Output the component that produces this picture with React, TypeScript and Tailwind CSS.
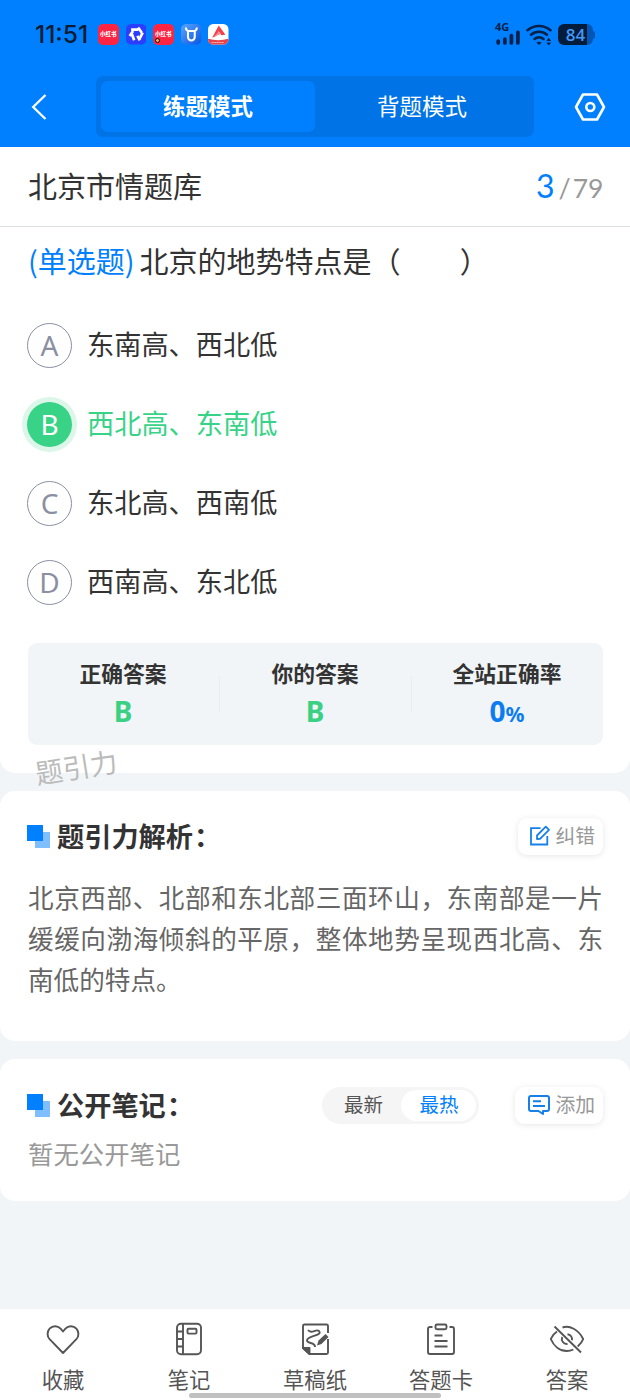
import type { ReactNode } from "react";
import { clsx } from "clsx";

const options = [
  { key: "A", text: "东南高、西北低" },
  { key: "B", text: "西北高、东南低" },
  { key: "C", text: "东北高、西南低" },
  { key: "D", text: "西南高、东北低" },
];

const answer = "B";

function StatusBar() {
  return (
    <div className="flex h-[66px] items-center pl-[35px] pr-[35px] pt-[3px]">
      <span className="w-[55px] whitespace-nowrap font-['Inter'] text-[24.5px] font-medium leading-none text-[#0b1c33]">
        11:51
      </span>
      <div className="ml-2 flex gap-[7px]">
        <span className="flex size-[20.5px] items-center justify-center whitespace-nowrap rounded-[5px] bg-[#ff2442] text-[5.5px] font-black text-white">
          小红书
        </span>
        <svg viewBox="0 0 20 20" className="size-[20.5px]">
          <rect width="20" height="20" rx="5" fill="#2b3dff" />
          <path
            d="M5 5.5h7M11.8 3.5l3.6 5M16.3 8.5l-3 5.8M13.5 16l-2.4-4.5M8 15.8L5.8 10M3.6 11.8l3.3-5"
            fill="none"
            stroke="#fff"
            strokeWidth="2.6"
          />
        </svg>
        <span className="relative flex size-[20.5px] items-center justify-center whitespace-nowrap rounded-[5px] bg-[#ff2442] text-[5.5px] font-black text-white">
          小红书
          <i className="absolute bottom-[2px] left-[2px] size-[5px] rounded-full border-[1.5px] border-[#1c0c0c] bg-[#e8b060]" />
        </span>
        <svg viewBox="0 0 20 20" className="size-[20.5px]">
          <defs>
            <linearGradient id="bull" x1="0" y1="0" x2="1" y2="1">
              <stop offset="0" stopColor="#5aa4ff" />
              <stop offset="1" stopColor="#0a55e0" />
            </linearGradient>
          </defs>
          <rect width="20" height="20" rx="5" fill="url(#bull)" />
          <path d="M6.8 6.8v6a3.3 3.3 0 0 0 6.6 0v-6zM4.8 3.5c0 2 .8 3 2.2 3.3M15.4 3.5c0 2-.8 3-2.2 3.3" fill="none" stroke="#fff" strokeWidth="2" />
        </svg>
        <svg viewBox="0 0 20 20" className="size-[20.5px]">
          <rect width="20" height="20" rx="5" fill="#fff" />
          <path d="M0 14.5q10 2.5 20 0V15a5 5 0 0 1-5 5H5a5 5 0 0 1-5-5z" fill="#e8434a" />
          <path d="M4 13.5L10.5 1.5 17 10.5l-4 .5-2.5-4-3 5z" fill="#f0414c" />
          <path d="M5 13l8-3.5-2.5-2z" fill="#ff8b8f" />
          <path d="M3.5 18h12" stroke="#ffb9ba" strokeWidth="1" strokeDasharray="1.3 .4" />
        </svg>
      </div>

      <div className="ml-auto flex items-center">
        <div className="flex w-[25px] flex-col">
          <span className="h-[6px] font-['Open_Sans'] text-[11px] font-bold leading-[6px] text-[#04214a]">4G</span>
          <svg viewBox="0 0 25 15" className="h-[15px] w-[25px]" stroke="#04214a" strokeWidth="3.7" strokeLinecap="round">
            <path d="M3.2 11v2M9.9 9v4M16.4 5.5V13M22.9 2.3V13" />
          </svg>
        </div>
        <svg viewBox="0 0 26 22" className="ml-[6px] h-[22px] w-[26px]" fill="none" stroke="#04214a" strokeWidth="2.5" strokeLinecap="round">
          <path d="M1.5 6.3a17.5 17.5 0 0 1 23 0M5 10.8a12.2 12.2 0 0 1 16 0M8.5 15a7 7 0 0 1 9 0" />
          <path d="M10.3 18.6q2.7-1.8 5.4 0L13 21z" fill="#04214a" stroke="none" />
          <path d="M20.3 17l2.4-3.2 2.4 3.2zM20.3 18.4h4.8L22.7 21.5z" fill="#04214a" stroke="none" />
        </svg>
        <div className="ml-[6px] flex h-[21px] w-[35px] items-center justify-center rounded-[6px] bg-linear-to-r from-[#041c3c] from-83% to-[#0456b4] to-83%">
          <span className="font-['Open_Sans'] text-[17px] font-semibold leading-none text-[#4499f5]">84</span>
        </div>
        <i className="h-2 w-[2px] rounded-r-full bg-[#0456b4]" />
      </div>
    </div>
  );
}

function ModeHeader() {
  return (
    <div className="flex h-[81px] items-center justify-between pl-[31px] pr-[24px]">
      <svg viewBox="0 0 16 26" className="h-[26px] w-4" fill="none" stroke="#fff" strokeWidth="2.3">
        <path d="M14.5 1L2.2 13l12.3 12" />
      </svg>
      <div className="ml-[9px] flex h-[61px] w-[438px] rounded-[7px] bg-[#0073e6] p-[5px] text-[22.5px] text-white">
        <div className="flex w-[214px] items-center justify-center rounded-[7px] bg-[#0080ff] pb-[2px] font-bold">练题模式</div>
        <div className="flex w-[214px] items-center justify-center pb-[2px]">背题模式</div>
      </div>
      <svg viewBox="0 0 32 28" className="h-7 w-8" fill="none" stroke="#fff" strokeWidth="2.6" strokeLinejoin="round">
        <path d="M9 1.5h14L30 14l-7 12.5H9L2 14z" />
        <circle cx="16.3" cy="14" r="4" />
      </svg>
    </div>
  );
}

function SectionTitle({ children }: { children: ReactNode }) {
  return (
    <div className="flex items-center">
      <div className="relative size-[23px]">
        <i className="absolute bottom-0 right-0 size-[15.5px] bg-[#80bfff]" />
        <i className="absolute left-0 top-0 size-4 bg-[#0080ff]" />
      </div>
      <h2 className="ml-[7px] -mt-[3px] text-[27.2px] font-bold leading-[36px] text-[#333]">
        {children}
        <span className="ml-px">：</span>
      </h2>
    </div>
  );
}

function ToolButton({ icon, label }: { icon: ReactNode; label: string }) {
  return (
    <button className="flex h-[37px] items-center gap-[4px] rounded-[9px] bg-white pr-2 text-[19.8px] leading-none text-[#999] shadow-[0_1px_6px_rgba(0,0,0,0.1)]">
      {icon}
      <span className="-mt-[2px]">{label}</span>
    </button>
  );
}

function Stat({ label, children }: { label: string; children: ReactNode }) {
  return (
    <div className="flex flex-1 flex-col items-center">
      <span className="text-[21.8px] font-bold leading-[30px] text-[#333]">{label}</span>
      <span className="mt-[3px] h-[40px] font-['Noto_Sans'] text-[28px] font-bold leading-[40px] text-[#3bd083]">{children}</span>
    </div>
  );
}

const navItems = [
  {
    label: "收藏",
    icon: <path d="M17 31L3.6 17.2a8 8 0 0 1 0-10.6 7.5 7.5 0 0 1 11 0L17 9.5l2.4-2.9a7.5 7.5 0 0 1 11 0 8 8 0 0 1 0 10.6z" />,
  },
  {
    label: "笔记",
    icon: (
      <>
        <rect x="5" y="1.8" width="24" height="30.4" rx="4" />
        <path d="M11 2v30M5 9.5h6M5 17h6M5 24.5h6" />
        <rect x="15.5" y="6.8" width="9" height="4.8" rx="1" />
      </>
    ),
  },
  {
    label: "草稿纸",
    icon: (
      <>
        <path d="M30 11V4a1.5 1.5 0 0 0-1.5-1.5h-22A1.5 1.5 0 0 0 5 4v22l6.5 6h17a1.5 1.5 0 0 0 1.5-1.5V17" />
        <path d="M5 26h6.500v6z" fill="#555" />
        <path d="M10 8c3.5 5 8-2 11 1 4 5-12 4.5-12 9.5 0 3.5 8.5 1.5 8 6.5" />
        <path d="M19 23.5l1.5-5 7-6.5 3 3-7 7z" fill="#555" stroke="none" />
      </>
    ),
  },
  {
    label: "答题卡",
    icon: (
      <>
        <path d="M8.5 5H6a2 2 0 0 0-2 2v23a2 2 0 0 0 2 2h22a2 2 0 0 0 2-2V7a2 2 0 0 0-2-2h-2.5" />
        <rect x="11.5" y="2.5" width="11" height="4.8" rx="1.5" />
        <path d="M10.5 13.5h8M10.5 19h13M10.5 24.5h13" />
      </>
    ),
  },
  {
    label: "答案",
    icon: (
      <>
        <path d="M7 9.5C4 11.5 1.8 14.5.8 17c3 7 9 12 16 12 2.5 0 4.5-.5 6.5-1.500M12.5 5.500c7-2.5 16 2 20.7 11.500-1 2.700-3 5.300-5.5 7.500" />
        <path d="M12.3 15a5 5 0 0 0 5.200 7M17.5 12.300a5 5 0 0 1 4.5 6" />
        <path d="M4.5 4.500L31 30.500" />
      </>
    ),
  },
];

export default function App() {
  return (
    <div className="flex h-[1400px] w-[630px] flex-col overflow-hidden bg-[#f1f5f8] font-['Noto_Sans_CJK_SC',sans-serif] text-[#333]">
      <header className="h-[147px] shrink-0 bg-[#0080ff]">
        <StatusBar />
        <ModeHeader />
      </header>

      <main className="flex flex-col gap-[18px]">
        <section className="relative h-[625.5px] rounded-b-[15px] bg-white">
          <div className="flex h-[80px] items-center justify-between border-b border-[#dcdfe2] pb-[2px] pl-[28px] pr-[26.5px]">
            <h1 className="text-[29px] leading-none">北京市情题库</h1>
            <div className="flex items-baseline font-['Lato'] text-[#999]">
              <span className="text-[32px] leading-none text-[#0080ff]">3</span>
              <span className="ml-[4px] text-[27px] leading-none">/</span>
              <span className="ml-[2px] text-[26.5px] leading-none">79</span>
            </div>
          </div>

          <p className="flex h-[67px] items-center whitespace-pre pl-[28px] text-[29px] leading-none">
            <span className="mr-[5px] text-[#0080ff]">(单选题)</span>北京的地势特点是（　　<span className="ml-px">）</span>
          </p>

          <ul className="pt-[12px]">
            {options.map(({ key, text }) => {
              const right = key === answer;
              return (
                <li key={key} className="flex h-[79px] items-center pl-[27px]">
                  <span
                    className={clsx(
                      "flex size-[45px] items-center justify-center rounded-full pb-[2px] font-['Noto_Sans'] text-[28px] leading-none",
                      right
                        ? "bg-[#38d387] text-white shadow-[0_0_0_5px_#dcf7e9]"
                        : "border-[1.5px] border-[#8b8fa3] text-[#8b8fa3]",
                    )}
                  >
                    {key}
                  </span>
                  <span className={clsx("-mt-[3px] ml-[15px] text-[27.2px] leading-none", right && "text-[#38d387]")}>{text}</span>
                </li>
              );
            })}
          </ul>

          <div className="mx-[27.5px] mt-[21px] flex h-[102px] items-center rounded-[9px] bg-[#f1f5f8]">
            <Stat label="正确答案">{answer}</Stat>
            <i className="h-9 w-px bg-[#e9edf1]" />
            <Stat label="你的答案">{answer}</Stat>
            <i className="h-9 w-px bg-[#e9edf1]" />
            <Stat label="全站正确率">
              <span className="text-[#0d7cf2]">
                0<span className="text-[21px] leading-none">%</span>
              </span>
            </Stat>
          </div>

          <span className="absolute left-[35px] top-[606px] -rotate-[9deg] text-[27.5px] leading-none text-[#bbb]">题引力</span>
        </section>

        <section className="h-[250.5px] rounded-[15px] bg-white px-[27px] pt-[27px]">
          <div className="flex h-[37px] items-center justify-between">
            <SectionTitle>题引力解析</SectionTitle>
            <ToolButton
              label="纠错"
              icon={
                <svg viewBox="0 0 22 22" className="ml-[11px] size-[22px]" fill="none" stroke="#1680e8" strokeWidth="1.8">
                  <path d="M11.5 3.2H2v16.3h16.3V11" />
                  <path d="M8 14v-3.5l8.8-8.8 3.2 3.2-9 9z" strokeLinejoin="round" />
                </svg>
              }
            />
          </div>
          <p className="ml-px mt-[21px] text-justify text-[25.6px] leading-[41px] text-[#666]">
            北京西部、北部和东北部三面环山，东南部是一片缓缓向渤海倾斜的平原，整体地势呈现西北高、东南低的特点。
          </p>
        </section>

        <section className="h-[142px] rounded-[15px] bg-white px-[27px] pt-[27.5px]">
          <div className="flex h-[37px] items-center">
            <SectionTitle>公开笔记</SectionTitle>
            <div className="ml-auto mr-[36px] flex h-[37px] w-[157px] items-center rounded-full bg-[#f5f5f5] p-[3px] text-[19.5px] leading-none text-[#555]">
              <span className="w-[76px] pb-[2px] text-center">最新</span>
              <span className="flex h-[31px] w-[75px] items-center justify-center rounded-full bg-white pb-[2px] text-[#0080ff]">最热</span>
            </div>
            <ToolButton
              label="添加"
              icon={
                <svg viewBox="0 0 24 22" className="ml-[12px] h-[22px] w-6" fill="none" stroke="#1680e8" strokeWidth="2">
                  <path d="M4 2h16a2 2 0 0 1 2 2v11a2 2 0 0 1-2 2h-4v3L11.5 17H4a2 2 0 0 1-2-2V4a2 2 0 0 1 2-2z" strokeLinejoin="round" />
                  <path d="M6 7.2h8M6 12h12" />
                </svg>
              }
            />
          </div>
          <p className="ml-px mt-[10px] text-[25.4px] leading-[38px] text-[#999]">暂无公开笔记</p>
        </section>
      </main>

      <nav className="relative mt-auto flex h-[91px] bg-white">
        {navItems.map(({ label, icon }) => (
          <div key={label} className="flex flex-1 flex-col items-center pt-[13px]">
            <svg viewBox="0 0 34 34" className="size-[34px]" fill="none" stroke="#555" strokeWidth="1.9" strokeLinejoin="round">
              {icon}
            </svg>
            <span className="mt-[9px] text-[21.3px] leading-[28px] text-[#555]">{label}</span>
          </div>
        ))}
        <i className="absolute bottom-[2px] left-[189px] h-[5px] w-[252px] rounded-full bg-[#c0c0c0]" />
      </nav>
    </div>
  );
}
